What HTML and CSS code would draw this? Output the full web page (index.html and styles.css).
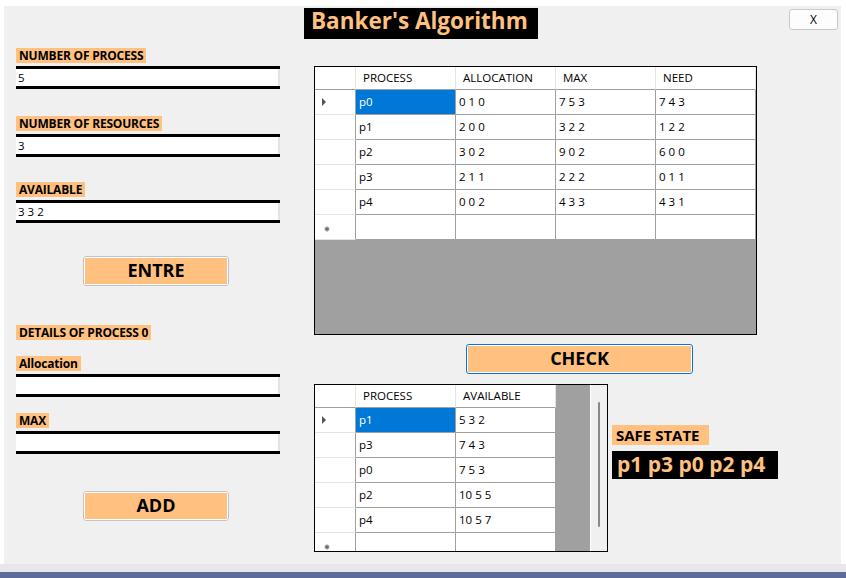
FILE: index.html
```html
<!DOCTYPE html>
<html>
<head>
<meta charset="utf-8">
<title>Banker's Algorithm</title>
<link rel="stylesheet" href="styles.css">
</head>
<body>
<div class="screen">
  <div class="window">
    <div class="left">
      <span class="tag">NUMBER OF PROCESS</span>
      <div class="input">5</div>
      <span class="tag gap27">NUMBER OF RESOURCES</span>
      <div class="input">3</div>
      <span class="tag gap25">AVAILABLE</span>
      <div class="input">3 3 2</div>
      <button class="btn gap33"><span>ENTRE</span></button>
      <span class="tag gap39">DETAILS OF PROCESS 0</span>
      <span class="tag gap16">Allocation</span>
      <div class="input"></div>
      <span class="tag gap16">MAX</span>
      <div class="input"></div>
      <button class="btn gap37"><span>ADD</span></button>
    </div>

    <div class="right">
      <div class="top">
        <h1 class="title">Banker's Algorithm</h1>
        <button class="close">X</button>
      </div>

      <div class="grid g1">
        <div class="cells c4">
          <div class="rh hd"></div>
          <div class="hc">PROCESS</div>
          <div class="hc">ALLOCATION</div>
          <div class="hc">MAX</div>
          <div class="hc">NEED</div>

          <div class="rh"><i class="arrow"></i></div>
          <div class="c sel">p0</div><div class="c">0 1 0</div><div class="c">7 5 3</div><div class="c">7 4 3</div>
          <div class="rh"></div>
          <div class="c">p1</div><div class="c">2 0 0</div><div class="c">3 2 2</div><div class="c">1 2 2</div>
          <div class="rh"></div>
          <div class="c">p2</div><div class="c">3 0 2</div><div class="c">9 0 2</div><div class="c">6 0 0</div>
          <div class="rh"></div>
          <div class="c">p3</div><div class="c">2 1 1</div><div class="c">2 2 2</div><div class="c">0 1 1</div>
          <div class="rh"></div>
          <div class="c">p4</div><div class="c">0 0 2</div><div class="c">4 3 3</div><div class="c">4 3 1</div>
          <div class="rh newrow"><svg class="star" width="6" height="6" viewBox="0 0 6 6"><path d="M3 0.5V5.5M0.8 1.7L5.2 4.3M0.8 4.3L5.2 1.7" stroke="#6a6a6a" stroke-width="1.2"/></svg></div>
          <div class="c"></div><div class="c"></div><div class="c"></div><div class="c"></div>
        </div>
      </div>

      <button class="btn check"><span>CHECK</span></button>

      <div class="bottom">
        <div class="grid g2">
          <div class="cells c2">
            <div class="rh hd"></div>
            <div class="hc">PROCESS</div>
            <div class="hc">AVAILABLE</div>

            <div class="rh"><i class="arrow"></i></div>
            <div class="c sel">p1</div><div class="c">5 3 2</div>
            <div class="rh"></div>
            <div class="c">p3</div><div class="c">7 4 3</div>
            <div class="rh"></div>
            <div class="c">p0</div><div class="c">7 5 3</div>
            <div class="rh"></div>
            <div class="c">p2</div><div class="c">10 5 5</div>
            <div class="rh"></div>
            <div class="c">p4</div><div class="c">10 5 7</div>
            <div class="rh newrow"><svg class="star" width="6" height="6" viewBox="0 0 6 6"><path d="M3 0.5V5.5M0.8 1.7L5.2 4.3M0.8 4.3L5.2 1.7" stroke="#6a6a6a" stroke-width="1.2"/></svg></div>
            <div class="c"></div><div class="c"></div>
          </div>
          <div class="vscroll"><div class="thumb"></div></div>
        </div>

        <div class="safe">
          <span class="safe-tag">SAFE STATE</span>
          <span class="result">p1 p3 p0 p2 p4</span>
        </div>
      </div>
    </div>
  </div>
  <div class="band"></div>
  <div class="taskbar"></div>
</div>
</body>
</html>
```

FILE: styles.css
```css
* {
  box-sizing: border-box;
  margin: 0;
  padding: 0;
}

html, body {
  width: 846px;
  height: 578px;
  overflow: hidden;
  background: #ffffff;
}

body {
  font-family: "Open Sans", "Noto Sans", sans-serif;
  color: #000;
}

.screen {
  display: flex;
  flex-direction: column;
  height: 578px;
}

.window {
  margin: 6px 5px 0 4px;
  height: 558px;
  background: #f0f0f0;
  display: flex;
}

.band {
  height: 8px;
  background: #e6e6ec;
}

.taskbar {
  height: 6px;
  background: #5c6b99;
}

/* ---------- left column ---------- */
.left {
  margin-left: 12px;
  width: 264px;
  padding-top: 42px;
  display: flex;
  flex-direction: column;
  align-items: flex-start;
}

.tag {
  display: inline-block;
  background: #ffc080;
  height: 15px;
  line-height: 15px;
  padding: 0 3px;
  font-weight: 700;
  font-size: 12px;
  letter-spacing: -0.2px;
  white-space: nowrap;
}

.gap27 { margin-top: 27px; }
.gap25 { margin-top: 25px; }
.gap33 { margin-top: 33px; }
.gap39 { margin-top: 39px; }
.gap16 { margin-top: 16px; }
.gap37 { margin-top: 37px; }

.input {
  margin-top: 3px;
  width: 264px;
  height: 23px;
  border-top: 3px solid #000;
  border-bottom: 3px solid #000;
  background: #fff;
  box-shadow: inset -2px 0 0 #e4e4e4;
  font-size: 11.5px;
  line-height: 13px;
  padding: 2px 0 0 2px;
}

.btn {
  appearance: none;
  font: inherit;
  color: #000;
  width: 146px;
  height: 30px;
  margin-left: 67px;
  border: 1px solid #c4c4c4;
  border-radius: 3px;
  background: #fff;
  padding: 1px;
  display: flex;
}

.btn span {
  flex: 1;
  background: #ffc080;
  font-weight: 700;
  font-size: 18px;
  line-height: 22px;
  display: flex;
  align-items: center;
  justify-content: center;
  padding-bottom: 3px;
}

/* ---------- right column ---------- */
.right {
  margin-left: 24px;
  flex: 1;
  display: flex;
  flex-direction: column;
  align-items: flex-start;
}

.top {
  align-self: stretch;
  display: flex;
  justify-content: space-between;
  align-items: flex-start;
}

.title {
  margin-top: 2px;
  width: 234px;
  height: 31px;
  background: #000;
  color: #ffc080;
  font-size: 22.5px;
  font-weight: 700;
  line-height: 25px;
  padding-left: 7px;
  white-space: nowrap;
}

.close {
  appearance: none;
  font: inherit;
  margin-top: 3px;
  margin-right: 3px;
  width: 49px;
  height: 21px;
  border: 1px solid #c8c8c8;
  border-radius: 3px;
  background: #fdfdfd;
  font-size: 12px;
  line-height: 18px;
  color: #000;
}

/* ---------- grids ---------- */
.grid {
  border: 1px solid #000;
  background: #a0a0a0;
  margin-left: 10px;
  display: flex;
  align-items: flex-start;
  overflow: hidden;
}

.g1 {
  margin-top: 27px;
  width: 443px;
  height: 269px;
}

.cells {
  display: grid;
  grid-auto-rows: 25px;
}

.c4 {
  grid-template-columns: 41px 100px 100px 100px 100px;
  grid-template-rows: 23px;
}

.c2 {
  grid-template-columns: 41px 100px 100px;
  grid-template-rows: 23px;
}

.rh {
  background: #fff;
  border-right: 1px solid #a0a0a0;
  border-bottom: 1px solid #e3e3e3;
  display: flex;
  align-items: center;
  padding-left: 7px;
}

.rh.hd {
  border-right-color: #e3e3e3;
  border-bottom-color: #a0a0a0;
}

.arrow {
  display: block;
  width: 0;
  height: 0;
  border-left: 4px solid #555;
  border-top: 4px solid transparent;
  border-bottom: 4px solid transparent;
}

.newrow {
  padding-left: 9px;
  padding-top: 4px;
}

.star { display: block; }

.hc {
  background: #fff;
  border-right: 1px solid #e3e3e3;
  border-bottom: 1px solid #a0a0a0;
  font-size: 11.5px;
  line-height: 22px;
  padding-left: 7px;
  white-space: nowrap;
}

.c {
  background: #fff;
  border-right: 1px solid #a0a0a0;
  border-bottom: 1px solid #a0a0a0;
  font-size: 11.5px;
  line-height: 24px;
  padding-left: 3px;
  white-space: nowrap;
}

.c.sel {
  background: #0078d7;
  color: #fff;
}

.check {
  margin-left: 162px;
  margin-top: 9px;
  width: 227px;
  border-color: #0078d7;
}

.check span {
  padding-bottom: 2px;
}

.bottom {
  margin-top: 10px;
  display: flex;
  align-items: flex-start;
}

.g2 {
  width: 294px;
  height: 168px;
  align-items: stretch;
}

.g2 .cells {
  align-self: flex-start;
}

.vscroll {
  margin-left: auto;
  width: 17px;
  flex-shrink: 0;
  background: #f0f0f0;
  border-left: 1px solid #ffffff;
  padding: 17px 0 0 7px;
}

.thumb {
  width: 2px;
  height: 125px;
  background: #888;
  border-radius: 1px;
}

.safe {
  margin-left: 4px;
  padding-top: 41px;
  display: flex;
  flex-direction: column;
  align-items: flex-start;
}

.safe-tag {
  width: 97px;
  height: 20px;
  background: #ffc080;
  font-weight: 700;
  font-size: 15px;
  line-height: 16px;
  padding: 2px 0 0 4px;
  white-space: nowrap;
}

.result {
  margin-top: 6px;
  height: 28px;
  background: #000;
  color: #ffc080;
  font-weight: 700;
  font-size: 21px;
  line-height: 26px;
  padding: 0 13px 0 5px;
  white-space: nowrap;
}
```
